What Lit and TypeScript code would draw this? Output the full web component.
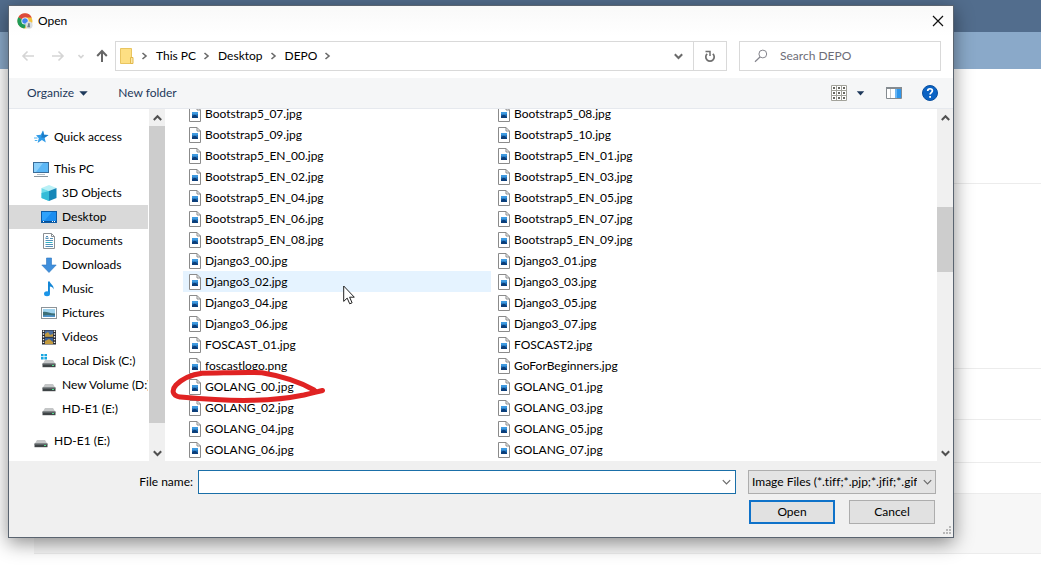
import { LitElement, html, svg, css, type TemplateResult } from "lit";
import { customElement, property, state } from "lit/decorators.js";
import { classMap } from "lit/directives/class-map.js";

const chevron = (dir: "right" | "down" | "up", cls = "") => {
  const d = { right: "M2.5 1 L6 4 L2.5 7", down: "M0.8 2.2 L4.5 6 L8.2 2.2", up: "M0.8 6 L4.5 2.2 L8.2 6" }[dir];
  return html`<svg class="chev ${cls}" width="9" height="8" viewBox="0 0 9 8" aria-hidden="true"><path d=${d} /></svg>`;
};

const drive = svg`
  <path d="M4 7h8l2.400 4H1.600z" fill="#c4c6c7"/>
  <path d="M1.500 10.600h13v3.600h-13z" fill="#3f4446"/>
  <path d="M1.500 10.600h13v1h-13z" fill="#70777a"/>
  <rect x="11" y="12" width="2" height="1" fill="#4fe08a"/>`;

const treeIcons: Record<string, TemplateResult> = {
  star: svg`
    <path d="M10 1.500l1 4.300 4.500.2-3.900 2.800 1.200 4.700-3.900-2.400L4.600 14l1.200-4.700L3 6.200l4.700-.4z" fill="#2f9be8"/>
    <path d="M10 1.500l1 4.300 4.500.2-3.900 2.800-3.400-.4z" fill="#1b7cc8"/>
    <path d="M1 9h3.500M1.800 11.500h2.600" stroke="#4db1f0" fill="none"/>`,
  pc: svg`
    <rect x=".5" y="1.500" width="15" height="10" fill="#5cb7f5" stroke="#3a6d99"/>
    <path d="M1 2h9L3 11H1z" fill="#8bd0fb"/>
    <path d="M4 13.500h8" stroke="#b7c0c6"/><path d="M1 15.500h14" stroke="#8b969e"/>`,
  cube: svg`
    <path d="M8 0l7.500 3L8 6 .5 3z" fill="#b9f0f6"/>
    <path d="M.5 3L8 6v10L.5 13z" fill="#6fdcea"/>
    <path d="M15.500 3L8 6v10l7.500-3z" fill="#1687b8"/>
    <path d="M.5 8L8 6v10L.5 13z" fill="#35bcd8"/>`,
  desktop: svg`
    <rect x=".5" y="2.500" width="15" height="11" fill="#1a8df0" stroke="#0c5ca8"/>
    <path d="M1 3h10L4 11H1z" fill="#2fa2fb"/>
    <path d="M1 12.500h14" stroke="#0a4f92"/><path d="M2 12.500h1M11 12.500h1M13 12.500h1" stroke="#fff"/>`,
  doc: svg`
    <path d="M2.500 .5h8l3 3v12h-11z" fill="#fff" stroke="#8a8f93"/>
    <path d="M10.500 .5v3h3" fill="none" stroke="#8a8f93"/>
    <path d="M4.500 5.500h3M9 5.500h3M4.500 7.500h7.500M4.500 11.500h7.500M4.500 13.500h7.500" stroke="#5591b8" fill="none"/>
    <path d="M4.500 9.500h7" stroke="#2fb3c4"/><path d="M5 4.500L6 3l1 1.500" fill="none" stroke="#3a78a8"/>`,
  down: svg`<path d="M5.500 1h5v7h4.700L8 15.500.8 8h4.700z" fill="#3f8fdc" stroke="#2b76c0" stroke-width=".6"/>`,
  music: svg`
    <path d="M7 .5h1.800c.4 2.800 4.400 3.600 3.800 7.900-.5-1.900-1.900-2.800-3.700-3v7.200H7z" fill="#1386d6"/>
    <ellipse cx="6" cy="12.700" rx="3" ry="2.500" fill="#1b95e8"/>`,
  picture: svg`
    <rect x=".5" y="2.500" width="15" height="11" fill="#fff" stroke="#8d9499"/>
    <rect x="2" y="4" width="12" height="8" fill="#9fd3ee"/>
    <path d="M2 7c3-1 6 1.500 12 1.500V12H2z" fill="#3d6f78"/>
    <path d="M2 10.500c4-1 8-.5 12 0V12H2z" fill="#4f93c9"/>`,
  video: svg`
    <rect x="1" y="1" width="14" height="14.500" fill="#2a2c33"/>
    <rect x="4" y="1.500" width="8" height="6.300" fill="#4c6f9f"/><rect x="4" y="8.700" width="8" height="6.300" fill="#37609b"/>
    <path d="M4 5l3-2 2 3 3-1v2.800H4zM4 12l4-2 4 3v2H4z" fill="#c29a3e"/>
    <path d="M2.500 1.500v14M13.500 1.500v14" stroke="#eef1f4" stroke-width="1.400" stroke-dasharray="1.400 1.400"/>`,
  windisk: svg`${drive}<path d="M0 1h2.600v2.300H0zM3.400 1H6v2.300H3.400zM0 4.100h2.600v2.300H0zM3.400 4.100H6v2.300H3.400z" fill="#19a6e0"/>`,
  disk: drive,
};

interface Place { label: string; icon: string; root?: boolean; gap?: boolean; }
const places: Place[] = [
  { label: "Quick access", icon: "star", root: true },
  { label: "This PC", icon: "pc", root: true, gap: true },
  { label: "3D Objects", icon: "cube" },
  { label: "Desktop", icon: "desktop" },
  { label: "Documents", icon: "doc" },
  { label: "Downloads", icon: "down" },
  { label: "Music", icon: "music" },
  { label: "Pictures", icon: "picture" },
  { label: "Videos", icon: "video" },
  { label: "Local Disk (C:)", icon: "windisk" },
  { label: "New Volume (D:)", icon: "disk" },
  { label: "HD-E1 (E:)", icon: "disk" },
  { label: "HD-E1 (E:)", icon: "disk", root: true, gap: true },
];

const files = [
  "Bootstrap5_07.jpg", "Bootstrap5_08.jpg", "Bootstrap5_09.jpg", "Bootstrap5_10.jpg",
  "Bootstrap5_EN_00.jpg", "Bootstrap5_EN_01.jpg", "Bootstrap5_EN_02.jpg", "Bootstrap5_EN_03.jpg",
  "Bootstrap5_EN_04.jpg", "Bootstrap5_EN_05.jpg", "Bootstrap5_EN_06.jpg", "Bootstrap5_EN_07.jpg",
  "Bootstrap5_EN_08.jpg", "Bootstrap5_EN_09.jpg", "Django3_00.jpg", "Django3_01.jpg",
  "Django3_02.jpg", "Django3_03.jpg", "Django3_04.jpg", "Django3_05.jpg",
  "Django3_06.jpg", "Django3_07.jpg", "FOSCAST_01.jpg", "FOSCAST2.jpg",
  "foscastlogo.png", "GoForBeginners.jpg", "GOLANG_00.jpg", "GOLANG_01.jpg",
  "GOLANG_02.jpg", "GOLANG_03.jpg", "GOLANG_04.jpg", "GOLANG_05.jpg",
  "GOLANG_06.jpg", "GOLANG_07.jpg",
];

const base = css`
  * { box-sizing: border-box; }
  button, input, select { font: inherit; font-variant-ligatures: none; color: inherit; margin: 0; padding: 0; border: 0; background: none; border-radius: 0; outline: none; }
  button { text-align: left; white-space: nowrap; }
  ul, ol { list-style: none; margin: 0; padding: 0; }
  svg { display: block; flex: none; }
  .chev { fill: none; stroke: #6a6a6a; stroke-width: 1.600; }
`;

@customElement("scroll-rail")
class ScrollRail extends LitElement {
  @property({ type: Number }) before = 0;
  @property({ type: Number }) size = 1;
  @property({ type: Number }) after = 0;
  static styles = [base, css`
    :host { display: flex; flex-direction: column; flex: none; width: 16px; background: #f0f0f0; }
    .end { height: 17px; flex: none; display: flex; align-items: center; justify-content: center; }
    .chev { stroke: #505050; stroke-width: 2; }
    .thumb { background: #cdcdcd; }
  `];
  render() {
    return html`
      <button class="end" aria-label="Scroll up">${chevron("up")}</button>
      <div style="flex:${this.before}"></div>
      <div class="thumb" style="flex:${this.size}"></div>
      <div style="flex:${this.after}"></div>
      <button class="end" aria-label="Scroll down">${chevron("down")}</button>`;
  }
}

@customElement("place-tree")
class PlaceTree extends LitElement {
  @state() current = 3;
  static styles = [base, css`
    :host { display: flex; width: 156px; flex: none; }
    nav { flex: 1; min-width: 0; padding-top: 16px; overflow: hidden; border-right: 1px solid #fff; }
    .place { display: flex; align-items: center; gap: 5px; width: 100%; height: 24px; padding-left: 32px; overflow: hidden; }
    .root { padding-left: 24px; }
    .gap { margin-top: 8px; }
    .current { background: #d9d9d9; }
  `];
  render() {
    return html`
      <nav aria-label="Places"><ul>
        ${places.map((p, i) => html`<li class=${classMap({ gap: !!p.gap })}>
          <button class=${classMap({ place: true, root: !!p.root, current: i === this.current })} @click=${() => (this.current = i)}>
            <svg width="16" height="16" viewBox="0 0 16 16" aria-hidden="true">${treeIcons[p.icon]}</svg>
            <span>${p.label}</span>
          </button></li>`)}
      </ul></nav>
      <scroll-rail .before=${0} .size=${297} .after=${21}></scroll-rail>`;
  }
}

@customElement("file-list")
class FileList extends LitElement {
  @state() hot = "Django3_02.jpg";
  static styles = [base, css`
    :host { display: flex; flex: 1; min-width: 0; position: relative; }
    .view { flex: 1; min-width: 0; overflow: hidden; padding: 0 137px 0 18px; }
    ul { display: grid; grid-template-columns: 1fr 1fr; column-gap: 1px; margin-top: -6px; }
    .file { display: flex; align-items: center; gap: 4px; width: 100%; height: 21px; padding-left: 6px; }
    .hot { background: #e5f3ff; }
    .mark, .cursor { position: absolute; pointer-events: none; }
    .mark { left: 5px; top: 261px; }
    .cursor { left: 178px; top: 176px; }
  `];
  render() {
    return html`
      <div class="view"><ul>
        ${files.map((f) => html`<li><button class=${classMap({ file: true, hot: f === this.hot })} @click=${() => (this.hot = f)}>
          <svg width="12" height="16" viewBox="0 0 12 16" aria-hidden="true">
            <path d="M.5 .5h7.500l3.500 3.500v11.500H.5z" fill="#fff" stroke="#8b8b8b"/>
            <path d="M8 .5v3.500h3.500" fill="none" stroke="#8b8b8b"/>
            <rect x="3" y="6" width="6" height="6" fill="#1c6fb8"/>
            <path d="M3 6h6v2L6 9 3 8z" fill="#3f9ae0"/><path d="M3 10l3-1.500L9 11v1H3z" fill="#0d3f7a"/>
          </svg><span>${f}</span></button></li>`)}
      </ul></div>
      <scroll-rail .before=${81} .size=${65} .after=${172}></scroll-rail>
      <svg class="cursor" width="12" height="20" viewBox="0 0 12 20" aria-hidden="true">
        <path d="M.7 1v15.400l3.500-3.300 2.500 5.700 2.400-1-2.500-5.600h4.700z" fill="#fff" stroke="#222"/>
      </svg>
      <svg class="mark" width="156" height="34" viewBox="0 0 156 34" aria-hidden="true">
        <path d="M152.500 20.500C147 22 141 23 134 25C117 28.500 98 30 82 30.300C55 31 27 28.500 10 27C2 25.500 1.500 20 6 15C12 9 22 4.500 32 3.200C54 3 75 2 92 2.700C112 6 132 13 144 20"
          fill="none" stroke="#e02323" stroke-width="5" stroke-linecap="round" stroke-linejoin="round"/>
      </svg>`;
  }
}

@customElement("open-dialog")
class OpenDialog extends LitElement {
  static styles = [base, css`
    :host { display: flex; flex-direction: column; background: #fff; border: 1px solid #5a6470; box-shadow: 0 5px 18px rgba(0, 0, 0, .45); overflow: hidden; }
    .title { display: flex; align-items: center; gap: 5px; height: 30px; flex: none; padding: 0 9px 0 8px; background: linear-gradient(#f9f9f9, #fff); }
    .title h1 { flex: 1; margin: 0; font: inherit; color: #000; }
    .nav { display: flex; align-items: center; flex: none; padding: 5px 12px 7px 12px; }
    .arrows { display: flex; align-items: center; width: 94px; }
    .arrows svg { fill: none; stroke: #d5d5d5; stroke-width: 1.600; }
    .arrows .up { stroke: #666; stroke-width: 2; }
    .back { margin-right: 16px; }
    .fwd { margin-right: 13px; }
    .recent { margin-right: 12px; }
    .address { display: flex; flex: 1; height: 30px; border: 1px solid #d9d9d9; align-items: center; }
    .crumbs { display: flex; align-items: center; flex: 1; gap: 7px; padding-left: 4px; }
    .crumbs li { display: flex; align-items: center; gap: 6px; }
    .address .drop { margin-right: 10px; }
    .drop .chev { stroke-width: 2; }
    .refresh { width: 33px; height: 28px; display: flex; align-items: center; justify-content: center; border-left: 1px solid #d9d9d9; }
    .search { display: flex; align-items: center; gap: 12px; width: 202px; height: 30px; margin-left: 12px; padding-left: 14px; border: 1px solid #d9d9d9; }
    .search input { flex: 1; min-width: 0; }
    .search input::placeholder { color: #6d6d78; opacity: 1; }
    .tools { display: flex; align-items: center; height: 31px; flex: none; padding: 0 15px 0 18px; background: #f5f6f7; border-bottom: 1px solid #e6e9ee; color: #1e395b; }
    .tools button { display: flex; align-items: center; gap: 5px; }
    .newf { margin-left: 30px; }
    .views { margin-left: auto; }
    .tools .views { gap: 9px; }
    .pane { margin: 0 20px 0 21px; }
    .body { display: flex; flex: 1; min-height: 0; }
    .foot { position: relative; flex: none; background: #f0f0f0; display: grid; grid-template-columns: 184px 1fr 188px; column-gap: 5px; row-gap: 6px; padding: 9px 17px 13px 0; }
    .foot label { text-align: right; line-height: 24px; }
    .combo { display: flex; height: 24px; border: 1px solid #1a6fa8; background: #fff; margin-right: 7px; }
    .combo input { flex: 1; min-width: 0; padding: 0 4px; }
    .combo button { width: 18px; display: flex; align-items: center; justify-content: center; }
    .thin { stroke-width: 1.200; }
    .type { display: flex; align-items: center; height: 24px; border: 1px solid #adadad; background: #e3e3e3; padding-right: 3px; }
    .type select { appearance: none; flex: 1; min-width: 0; height: 22px; padding-left: 3px; margin-right: 6px; }
    .actions { grid-column: 2 / 4; display: flex; justify-content: flex-end; gap: 14px; padding-right: 1px; }
    .actions button { width: 86px; height: 24px; text-align: center; background: #e1e1e1; border: 1px solid #adadad; }
    .actions .primary { border: 2px solid #0f72c9; }
    .grip { position: absolute; right: 2px; bottom: 2px; }
  `];
  render() {
    return html`
      <header class="title">
        <svg width="16" height="16" viewBox="0 0 16 16" aria-hidden="true">
          <circle cx="8" cy="8" r="7.500" fill="#f3c13a"/>
          <path d="M8 8L1.300 4.300A7.600 7.600 0 0 1 14.800 4.600H8z" fill="#dc4a3b"/>
          <path d="M8 8L1.300 4.300A7.600 7.600 0 0 0 7.300 15.600L10.500 10z" fill="#1f9a58"/>
          <circle cx="8" cy="8" r="3.600" fill="#fff"/><circle cx="8" cy="8" r="2.800" fill="#4486ee"/>
          <circle cx="12" cy="12.200" r="3.600" fill="#d8dde0"/><path d="M12 9.700c1.500 1 .3 2 1.300 4.500h-3c0-2 1.500-2.500.4-3.300z" fill="#75818a"/>
        </svg>
        <h1>Open</h1>
        <button aria-label="Close"><svg width="12" height="12" viewBox="0 0 12 12"><path d="M1 1l10 10M11 1L1 11" stroke="#111" stroke-width="1.200"/></svg></button>
      </header>
      <div class="nav">
        <div class="arrows">
          <button class="back" aria-label="Back"><svg width="14" height="12" viewBox="0 0 14 12"><path d="M13 6H2M6.500 1.500L2 6l4.500 4.500"/></svg></button>
          <button class="fwd" aria-label="Forward"><svg width="14" height="12" viewBox="0 0 14 12"><path d="M1 6h11M7.500 1.500L12 6l-4.500 4.500"/></svg></button>
          <button class="recent" aria-label="Recent locations"><svg width="6" height="5" viewBox="0 0 6 5"><path d="M.5 1L3 3.500 5.500 1"/></svg></button>
          <button aria-label="Up"><svg class="up" width="12" height="14" viewBox="0 0 12 14"><path d="M6 13V2M1.200 7L6 2l4.800 5"/></svg></button>
        </div>
        <div class="address">
          <ol class="crumbs">
            <li><svg width="14" height="16" viewBox="0 0 14 16" aria-hidden="true"><path d="M.5 .5h11v15H.5z" fill="#fddf83" stroke="#e9c560"/><path d="M10.500 9.500h2.500v6h-2.500z" fill="#fbe7a6" stroke="#e3b94a"/></svg>${chevron("right")}</li>
            ${["This PC", "Desktop", "DEPO"].map((c) => html`<li><button>${c}</button>${chevron("right")}</li>`)}
          </ol>
          <button class="drop" aria-label="Previous locations">${chevron("down")}</button>
          <button class="refresh" aria-label="Refresh">
            <svg width="12" height="13" viewBox="0 0 12 13"><path d="M8.800 3.800A4.200 4.200 0 1 1 3.200 3.800" fill="none" stroke="#707070" stroke-width="1.700"/><path d="M1.500 1.500h4.500v4.500" fill="none" stroke="#707070" stroke-width="1.500"/></svg>
          </button>
        </div>
        <div class="search">
          <svg width="14" height="14" viewBox="0 0 14 14" aria-hidden="true"><circle cx="8.800" cy="5" r="3.900" fill="none" stroke="#85858d"/><path d="M6 8L1 12.800" stroke="#85858d" stroke-width="1.200"/></svg>
          <input type="text" aria-label="Search DEPO" placeholder="Search DEPO" />
        </div>
      </div>
      <div class="tools">
        <button>Organize <svg width="9" height="5" viewBox="0 0 9 5"><path d="M.3 .3h8.400L4.500 4.800z" fill="#1e395b"/></svg></button>
        <button class="newf">New folder</button>
        <button class="views" aria-label="Change your view">
          <svg width="16" height="16" viewBox="0 0 16 16">
            <path d="M.5 .5h15v15H.5zM5.500 .5v15M10.500 .5v15M.5 5.500h15M.5 10.500h15" fill="#fff" stroke="#a2a29a"/>
            <path d="M2 3h2M7 3h2M12 3h2M2 8h2M7 8h2M12 8h2M2 13h2M7 13h2M12 13h2" stroke="#66665f" stroke-width="2"/>
          </svg>
          <svg width="9" height="5" viewBox="0 0 9 5"><path d="M.8 .3h7.400L4.500 4.500z" fill="#1e395b"/></svg>
        </button>
        <button class="pane" aria-label="Show the preview pane">
          <svg width="16" height="12" viewBox="0 0 16 12"><path d="M.5 .5h15v11H.5z" fill="#fff" stroke="#858b90"/><path d="M0 1h16" stroke="#858b90" stroke-width="2"/><path d="M4.500 2v9" stroke="#c3c8cb"/><path d="M9 2h6v9H9z" fill="#2f96ea"/><path d="M9 2h2v9H9z" fill="#6cb6f3"/></svg>
        </button>
        <button aria-label="Get help">
          <svg width="16" height="16" viewBox="0 0 16 16"><circle cx="8" cy="8" r="7.500" fill="#0b63c4" stroke="#0a4f9f"/><path d="M5.700 6.100c0-3.200 4.700-3 4.700-.3C10.400 7.700 8.100 7.600 8.100 9.600" fill="none" stroke="#fff" stroke-width="1.700"/><rect x="7.200" y="11" width="1.800" height="1.800" fill="#fff"/></svg>
        </button>
      </div>
      <div class="body"><place-tree></place-tree><file-list></file-list></div>
      <footer class="foot">
        <label for="fname">File name:</label>
        <div class="combo"><input id="fname" type="text" /><button aria-label="Recent names">${chevron("down", "thin")}</button></div>
        <div class="type">
          <select aria-label="File type"><option>Image Files (*.tiff;*.pjp;*.jfif;*.gif)</option></select>${chevron("down", "thin")}
        </div>
        <div class="actions"><button class="primary">Open</button><button>Cancel</button></div>
        <svg class="grip" width="9" height="9" viewBox="0 0 9 9" aria-hidden="true"><path d="M7 1h2M4 4h2M7 4h2M1 7h2M4 7h2M7 7h2" stroke="#b8b8b8" stroke-width="2"/></svg>
      </footer>`;
  }
}

@customElement("app-root")
class AppRoot extends LitElement {
  static styles = [base, css`
    :host { display: block; position: relative; height: 100vh; min-height: 560px; overflow: hidden; background: #fff; font: 12px/16px Lato, "Open Sans", sans-serif; color: #000; }
    .page { display: flex; flex-direction: column; height: 100%; }
    .bar { height: 32px; background: #526d8d; }
    .subbar { height: 37px; background: #8aa9c9; }
    .rows { flex: 1; display: grid; grid-template-rows: 115fr 185fr 51fr 43fr 31fr 60fr 13fr; margin-left: 34px; }
    .row { border-bottom: 1px solid #ececec; }
    .row:last-child { border: 0; }
    .tinted { background: #f7f7f7; }
    open-dialog { position: absolute; inset: 5px 87px 29px 8px; }
  `];
  render() {
    return html`
      <div class="page">
        <div class="bar"></div>
        <div class="subbar"></div>
        <div class="rows">${[0, 1, 2, 3, 4, 5, 6].map((i) => html`<div class=${classMap({ row: true, tinted: i === 5 })}></div>`)}</div>
      </div>
      <open-dialog role="dialog" aria-label="Open"></open-dialog>`;
  }
}
